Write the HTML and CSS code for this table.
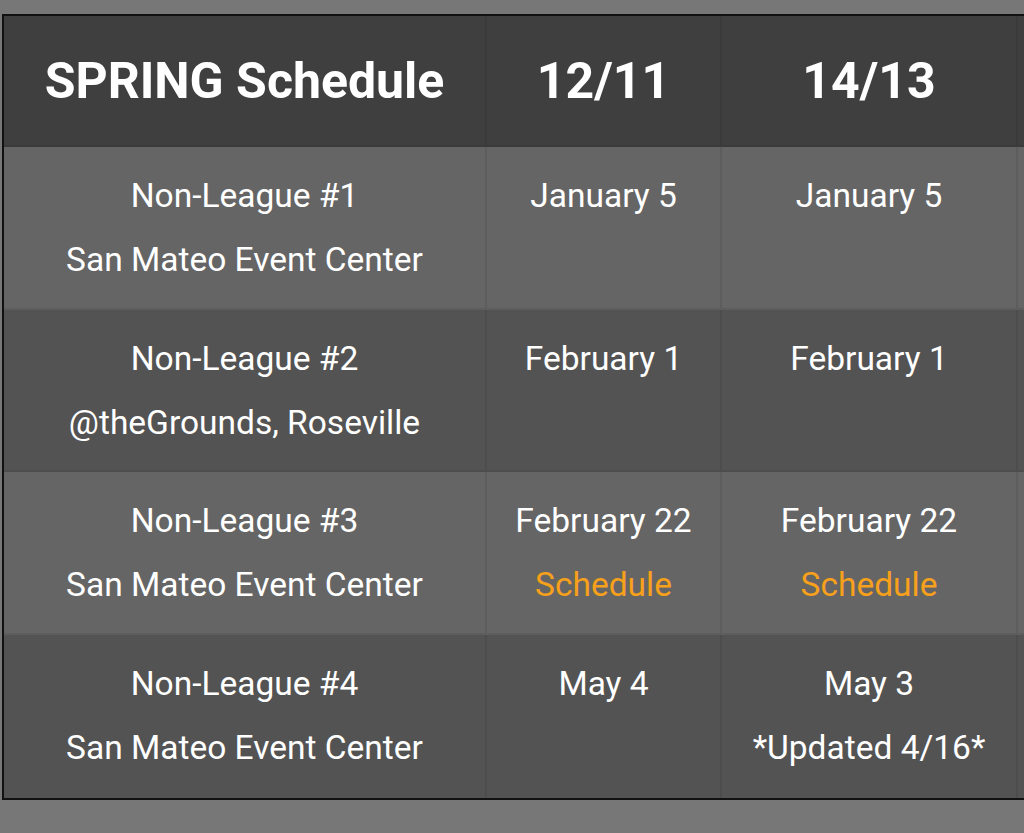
FILE: index.html
```html
<!DOCTYPE html>
<html lang="en">
<head>
<meta charset="utf-8">
<title>SPRING Schedule</title>
<link rel="stylesheet" href="styles.css">
</head>
<body>
<div class="page">
  <table class="schedule">
    <thead>
      <tr>
        <th class="c1">SPRING Schedule</th>
        <th class="c2">12/11</th>
        <th class="c3">14/13</th>
        <th class="c4"></th>
      </tr>
    </thead>
    <tbody>
      <tr class="odd">
        <td><span class="line">Non-League #1</span><span class="line">San Mateo Event Center</span></td>
        <td><span class="line">January 5</span></td>
        <td><span class="line">January 5</span></td>
        <td></td>
      </tr>
      <tr class="even">
        <td><span class="line">Non-League #2</span><span class="line">@theGrounds, Roseville</span></td>
        <td><span class="line">February 1</span></td>
        <td><span class="line">February 1</span></td>
        <td></td>
      </tr>
      <tr class="odd">
        <td><span class="line">Non-League #3</span><span class="line">San Mateo Event Center</span></td>
        <td><span class="line">February 22</span><a class="line link" href="#">Schedule</a></td>
        <td><span class="line">February 22</span><a class="line link" href="#">Schedule</a></td>
        <td></td>
      </tr>
      <tr class="even last">
        <td><span class="line">Non-League #4</span><span class="line">San Mateo Event Center</span></td>
        <td><span class="line">May 4</span></td>
        <td><span class="line">May 3</span><span class="line">*Updated 4/16*</span></td>
        <td></td>
      </tr>
    </tbody>
  </table>
</div>
</body>
</html>
```
FILE: styles.css
```css
html, body {
  margin: 0;
  padding: 0;
  background: #777777;
}
.page {
  padding: 14px 0 33px 2px;
  overflow: hidden;
  font-family: Roboto, "Liberation Sans", sans-serif;
}
.schedule {
  border-collapse: separate;
  border-spacing: 0;
  border: 2px solid #111111;
  table-layout: fixed;
  width: 1318px;
  color: #ffffff;
}
.schedule th,
.schedule td {
  box-sizing: border-box;
  text-align: center;
  vertical-align: top;
  border-right: 2px solid rgba(0, 0, 0, 0.07);
  border-bottom: 2px solid rgba(0, 0, 0, 0.07);
  padding: 0 8px;
}
.schedule th {
  background: #3f3f3f;
  font-weight: 700;
  font-size: 50px;
  line-height: 65px;
  padding-top: 33px;
  padding-bottom: 31px;
  white-space: nowrap;
}
.schedule .c1 { width: 483px; }
.schedule .c2 { width: 235px; }
.schedule .c3 { width: 296px; }
.schedule .c4 { width: 300px; }
.schedule td {
  font-size: 33.5px;
  line-height: 64px;
  height: 162.5px;
  padding-top: 17px;
  padding-bottom: 15.5px;
  white-space: nowrap;
}
.line {
  display: block;
  height: 64px;
  overflow: hidden;
}
.schedule tr.odd td { background: #656565; }
.schedule tr.even td { background: #535353; }
.schedule tr.last td { border-bottom: none; height: 163px; padding-bottom: 16px; }
.link {
  color: #f6a01c;
  text-decoration: none;
}
```
